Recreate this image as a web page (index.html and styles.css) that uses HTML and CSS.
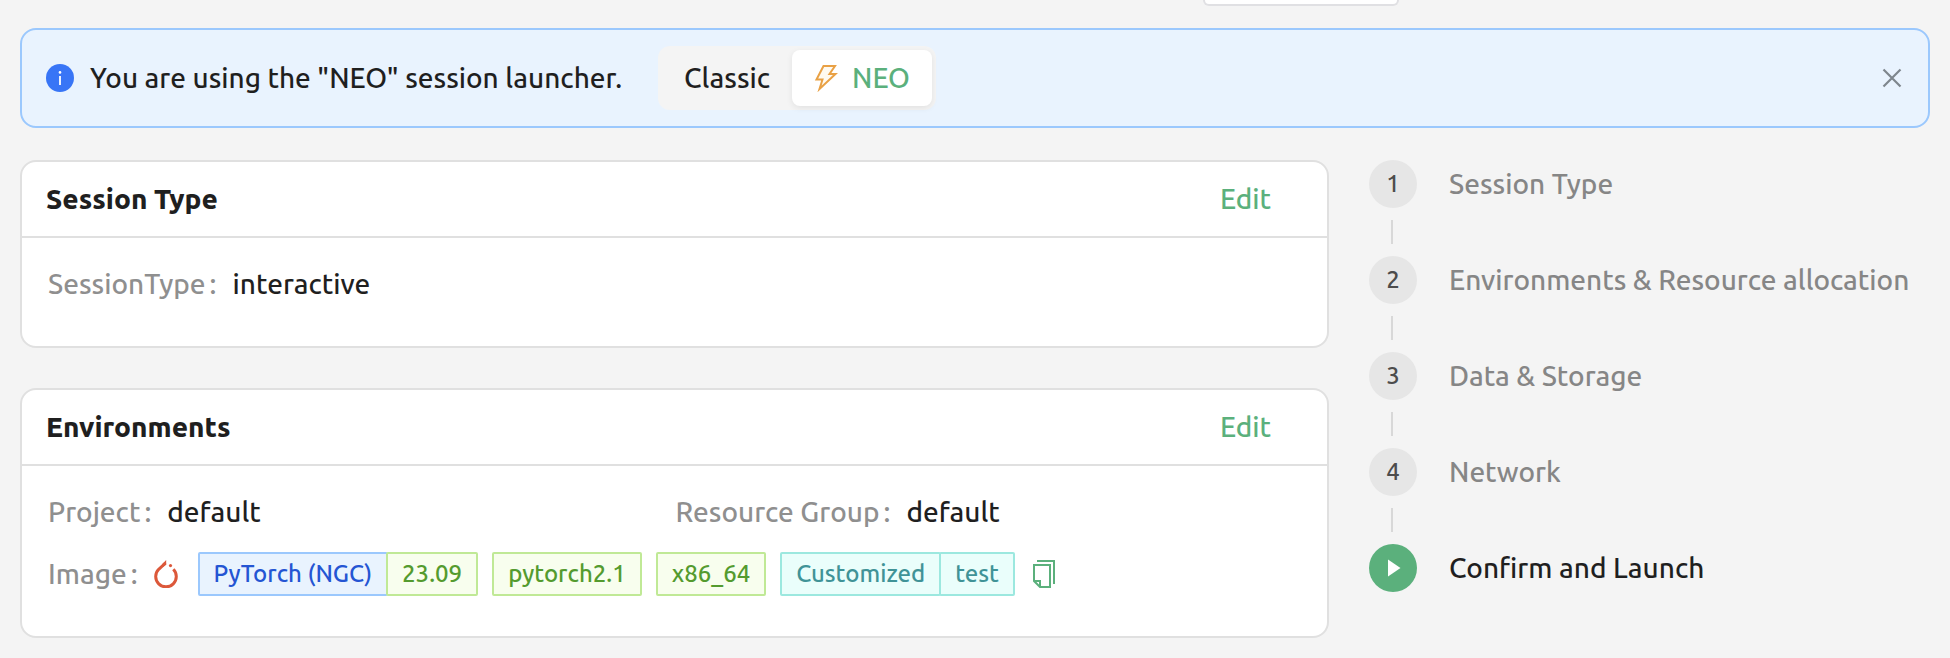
FILE: index.html
```html
<!DOCTYPE html>
<html lang="en">
<head>
<meta charset="utf-8">
<title>Session launcher</title>
<link rel="stylesheet" href="styles.css">
</head>
<body>
<button class="top-button" type="button" aria-label="Menu"></button>
<div class="page">
  <section class="alert">
    <svg class="alert-icon" viewBox="0 0 28 28" aria-hidden="true"><circle cx="14" cy="14" r="14" fill="#3875f6"/><circle cx="14" cy="8.400" r="1.300" fill="#fff"/><path d="M14 12v9" stroke="#fff" stroke-width="1.800"/></svg>
    <p class="alert-text">You are using the "NEO" session launcher.</p>
    <div class="segmented">
      <button class="segment" type="button">Classic</button>
      <button class="segment segment-active" type="button" aria-pressed="true">
        <svg class="bolt" viewBox="0 0 24 28" aria-hidden="true"><path d="M9.500 2H21L15.500 10H21.500L5.500 25L8.500 15.500H2.500Z" fill="#fffaf0" stroke="#e9a145" stroke-width="2"/></svg>
        <span>NEO</span>
      </button>
    </div>
    <button class="close" type="button" aria-label="Close"><svg viewBox="0 0 20 20"><path d="M1.500 1.500L18.500 18.500M18.500 1.500L1.500 18.500" stroke="#7e868d" stroke-width="2.200" fill="none"/></svg></button>
  </section>

  <div class="content">
    <main class="cards">
      <section class="card">
        <header class="card-head"><h2>Session Type</h2><button class="edit" type="button">Edit</button></header>
        <dl class="card-body">
          <div class="field"><dt>SessionType</dt><dd>interactive</dd></div>
        </dl>
      </section>
      <section class="card">
        <header class="card-head"><h2>Environments</h2><button class="edit" type="button">Edit</button></header>
        <dl class="card-body">
          <div class="field"><dt>Project</dt><dd>default</dd></div>
          <div class="field"><dt>Resource Group</dt><dd>default</dd></div>
          <div class="field field-wide"><dt>Image</dt>
            <dd class="image">
              <svg class="flame" viewBox="0 0 24 28" aria-hidden="true"><path d="M11.500 3L4.700 9.300A10.300 10.300 0 1 0 19.300 9.300" fill="none" stroke="#dc583a" stroke-width="3"/><path d="M12.200 0V4.800L9 7L8 4.200Z" fill="#dc583a"/><circle cx="16.500" cy="5.600" r="1.600" fill="#dc583a"/></svg>
              <span class="tags"><span class="tag blue">PyTorch (NGC)</span><span class="tag green">23.09</span></span>
              <span class="tags"><span class="tag green">pytorch2.1</span></span>
              <span class="tags"><span class="tag green">x86_64</span></span>
              <span class="tags"><span class="tag cyan">Customized</span><span class="tag cyan">test</span></span>
              <button class="copy" type="button" aria-label="Copy"><svg viewBox="0 0 22 28"><path d="M4 1H21V24M2 5H17V27H7L1 21V5ZM1 21H7V27" fill="none" stroke="#5bb07c" stroke-width="2"/></svg></button>
            </dd>
          </div>
        </dl>
      </section>
    </main>
    <nav aria-label="Steps">
      <ol class="steps">
        <li class="step"><span class="dot">1</span><span class="step-title">Session Type</span></li>
        <li class="step"><span class="dot">2</span><span class="step-title">Environments &amp; Resource allocation</span></li>
        <li class="step"><span class="dot">3</span><span class="step-title">Data &amp; Storage</span></li>
        <li class="step"><span class="dot">4</span><span class="step-title">Network</span></li>
        <li class="step step-current" aria-current="step"><span class="dot"><svg class="play" viewBox="0 0 14 20" aria-hidden="true"><path d="M1 1.500V18.500L13.500 10Z" fill="#fff"/></svg></span><span class="step-title">Confirm and Launch</span></li>
      </ol>
    </nav>
  </div>
</div>
</body>
</html>
```
FILE: styles.css
```css
* { box-sizing: border-box; }
body {
  margin: 0;
  background: #f4f4f4;
  color: #1f1f1f;
  font: 500 28px/44px Ubuntu, "Noto Sans", "Open Sans", sans-serif;
}
button { margin: 0; padding: 0; border: 0; background: none; color: inherit; font: inherit; cursor: pointer; }
svg { display: block; }
h2, p, dl, dd, ol { margin: 0; padding: 0; }

.top-button {
  display: block;
  width: 196px;
  height: 6px;
  margin-left: 1203px;
  border: 2px solid #e0e0e3;
  border-top: 0;
  border-radius: 0 0 12px 12px;
  background: #fff;
}
.page { padding: 22px 20px 20px; }

.alert {
  display: flex;
  align-items: center;
  min-height: 100px;
  padding: 16px 24px;
  border: 2px solid #9bc8fd;
  border-radius: 16px;
  background: #e9f3fe;
}
.alert-icon { width: 28px; height: 28px; margin-right: 16px; }
.alert-text { margin-right: 36px; }
.segmented { display: flex; padding: 4px; border-radius: 12px; background: #f4f4f4; }
.segment { display: flex; align-items: center; gap: 14px; height: 56px; padding: 0 22px; border-radius: 8px; }
.segment-active { background: #fff; color: #5bb07c; box-shadow: 0 2px 6px #00000014; }
.bolt { width: 24px; height: 28px; }
.close { margin-left: auto; padding: 2px; }
.close svg { width: 20px; height: 20px; }

.content { display: grid; grid-template-columns: 7fr 3fr; gap: 40px; margin-top: 32px; }
.cards { display: flex; flex-direction: column; gap: 40px; }
.card { border: 2px solid #e0e0e0; border-radius: 16px; background: #fff; }
.card-head {
  display: flex;
  align-items: center;
  justify-content: space-between;
  min-height: 76px;
  padding: 0 24px;
  border-bottom: 2px solid #e0e0e0;
}
.card-head h2 { font-size: 28px; font-weight: 800; }
.edit { padding: 0 32px; color: #5bb07c; }
.card-body { display: grid; grid-template-columns: 1fr 1fr; row-gap: 18px; padding: 24px 24px 40px 26px; }
.field { display: flex; align-items: center; }
.field-wide { grid-column: 1 / -1; }
dt { margin-right: 16px; color: #8f8f8f; }
dt::after { content: ":"; margin-left: 4px; }
.image { display: flex; align-items: center; gap: 14px; }
.flame { width: 24px; height: 28px; margin-right: 6px; }
.tags { display: flex; }
.tag { padding: 0 14px; border: 2px solid; border-radius: 2px; font-size: 24px; line-height: 40px; }
.tag + .tag { margin-left: -2px; }
.blue { border-color: #9bc8fd; background: #e9f3fe; color: #2455d3; }
.green { border-color: #c0e996; background: #f8feee; color: #549b2f; }
.cyan { border-color: #9ce8df; background: #eafefb; color: #409397; }
.copy { margin-left: 4px; }
.copy svg { width: 22px; height: 28px; }

.steps { list-style: none; }
.step { display: flex; flex-wrap: wrap; align-items: center; column-gap: 32px; }
.step:not(:last-child)::after {
  content: "";
  flex: none;
  width: 2px;
  height: 24px;
  margin: 12px 500px 12px 22px;
  background: #d8d8d8;
}
.dot { display: grid; place-items: center; width: 48px; height: 48px; border-radius: 50%; background: #e6e6e6; color: #4c4c4c; font-size: 24px; }
.step-title { color: #868686; }
.step-current .dot { background: #5bb07c; }
.step-current .step-title { color: #1f1f1f; }
.play { width: 14px; height: 20px; margin-left: 2px; }
```
